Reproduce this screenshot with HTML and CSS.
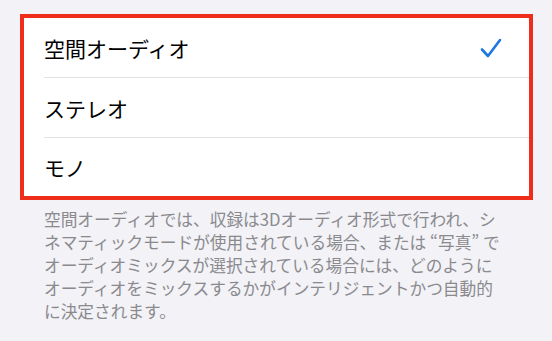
FILE: index.html
```html
<!DOCTYPE html>
<html lang="ja">
<head>
    <meta charset="UTF-8">
    <meta name="viewport" content="width=device-width, initial-scale=1.0">
    <title>オーディオ</title>
    <link rel="stylesheet" href="styles.css">
</head>
<body>

    <div class="settings">
        <div class="option-list">
            <div class="option">
                <div class="option-label">
                    <span>空間オーディオ</span>
                    <svg class="check" viewBox="0 0 22 20" width="22" height="20">
                        <path d="M2 11.5 L8 18 L20 2" fill="none" stroke="#1d78e0" stroke-width="2.6" stroke-linecap="round" stroke-linejoin="round"/>
                    </svg>
                </div>
            </div>
            <div class="option">
                <div class="option-label"><span>ステレオ</span></div>
            </div>
            <div class="option">
                <div class="option-label"><span>モノ</span></div>
            </div>
        </div>

        <p class="footnote">
            空間オーディオでは、収録は3Dオーディオ形式で行われ、シ<br>
            ネマティックモードが使用されている場合、または “写真” で<br>
            オーディオミックスが選択されている場合には、どのように<br>
            オーディオをミックスするかがインテリジェントかつ自動的<br>
            に決定されます。
        </p>
    </div>

</body>
</html>
```

FILE: styles.css
```css
body, html {
    margin: 0;
    padding: 0;
    background-color: #f2f2f7;
    font-family: "Noto Sans CJK JP", "Noto Sans", sans-serif;
}

.settings {
    padding: 14px 19px 0 20px;
}

.option-list {
    background-color: #ffffff;
    border: 4px solid #ee2e1b;
    width: 513px;
    box-sizing: border-box;
}

.option {
    padding-left: 20px;
}

.option-label {
    display: flex;
    align-items: center;
    justify-content: space-between;
    height: 59px;
    padding-right: 27px;
    border-bottom: 1px solid #e2e2e6;
    font-size: 21px;
    color: #000000;
}

.option:last-child .option-label {
    border-bottom: none;
    height: 58px;
}

.check {
    display: block;
}

.footnote {
    margin: 8px 0 0 0;
    padding-left: 24px;
    font-size: 16.7px;
    line-height: 23px;
    color: #8a8a8e;
    white-space: nowrap;
}
```
